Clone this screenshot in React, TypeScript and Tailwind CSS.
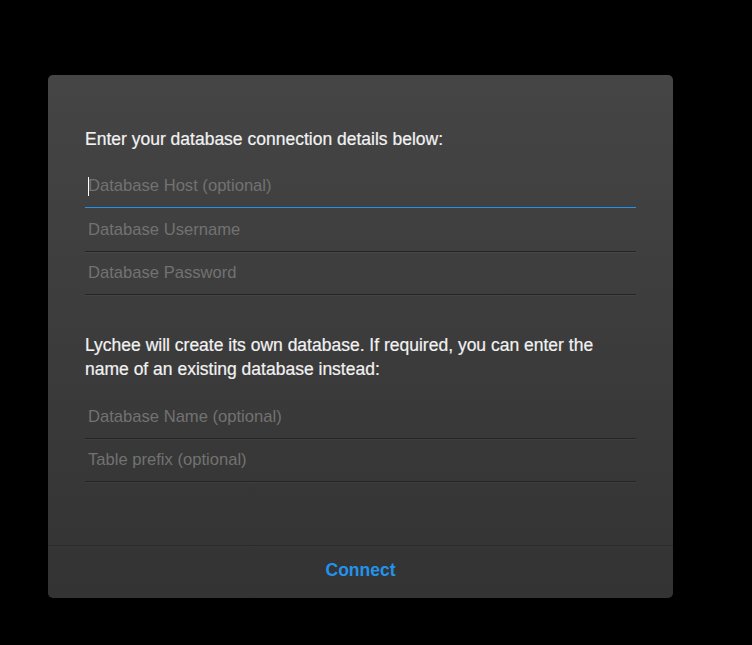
import React from 'react'

type Field = {
  placeholder: string
  active?: boolean
  short?: boolean
}

const connectionFields: Field[] = [
  { placeholder: 'Database Host (optional)', active: true },
  { placeholder: 'Database Username' },
  { placeholder: 'Database Password', short: true },
]

const databaseFields: Field[] = [
  { placeholder: 'Database Name (optional)' },
  { placeholder: 'Table prefix (optional)', short: true },
]

function Input({ placeholder, active, short }: Field) {
  return (
    <div className="relative">
      <input
        type="text"
        placeholder={placeholder}
        className={`block w-full bg-transparent pl-[3px] text-[16.6px] text-white outline-none placeholder:text-[#727272] border-b ${
          short ? 'h-[43px]' : 'h-[44px]'
        } ${
          active
            ? 'border-[#2293ec]'
            : 'border-[#242424] shadow-[0_1px_0_rgba(255,255,255,0.04)]'
        }`}
      />
      {active && <span className="absolute left-[3px] top-[13px] w-px h-[19px] bg-white" />}
    </div>
  )
}

export default function App() {
  return (
    <div
      className="min-h-screen bg-black pt-[75px] pl-[48px]"
      style={{ fontFamily: '"Liberation Sans", Arial, sans-serif' }}
    >
      <div className="w-[625px] rounded-[5px] bg-gradient-to-b from-[#454545] to-[#333333] overflow-hidden">
        <div className="px-[37px] pt-[52px] pb-[63px]">
          <p className="text-[17.5px] leading-6 text-[#f2f2f2] [-webkit-text-stroke:0.2px_#f2f2f2] mb-[13px]">
            Enter your database connection details below:
          </p>
          {connectionFields.map((f) => (
            <Input key={f.placeholder} {...f} />
          ))}

          <p className="text-[17.5px] leading-6 text-[#f2f2f2] [-webkit-text-stroke:0.2px_#f2f2f2] mt-[38px] mb-[14px]">
            Lychee will create its own database. If required, you can enter the name of an
            existing database instead:
          </p>
          {databaseFields.map((f) => (
            <Input key={f.placeholder} {...f} />
          ))}
        </div>

        <div className="h-[53px] pb-[4px] flex items-center justify-center border-t border-[#2a2a2a] shadow-[inset_0_1px_0_rgba(255,255,255,0.02)]">
          <button className="text-[17.5px] font-bold text-[#2293ec]">Connect</button>
        </div>
      </div>
    </div>
  )
}
